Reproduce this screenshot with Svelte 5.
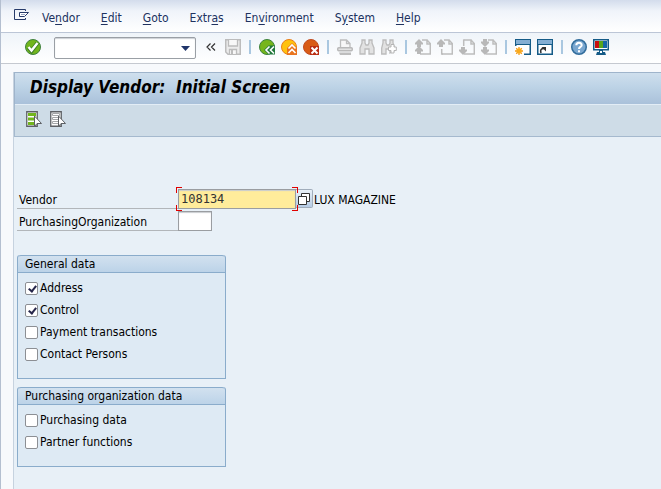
<script>
  const menus = [
    ['Ve', 'n', 'dor'],
    ['', 'E', 'dit'],
    ['', 'G', 'oto'],
    ['Extr', 'a', 's'],
    ['En', 'v', 'ironment'],
    ['S', 'y', 'stem'],
    ['', 'H', 'elp'],
  ];
  const tools = [
    ['save'],
    ['back', 'exit', 'cancel'],
    ['print', 'find', 'find next'],
    ['first page', 'previous page', 'next page', 'last page'],
    ['new session', 'create shortcut'],
    ['help', 'customize layout'],
  ];
  let general = $state([
    { label: 'Address', checked: true },
    { label: 'Control', checked: true },
    { label: 'Payment transactions', checked: false },
    { label: 'Contact Persons', checked: false },
  ]);
  let purchasing = $state([
    { label: 'Purchasing data', checked: false },
    { label: 'Partner functions', checked: false },
  ]);
  let vendor = $state('108134');
  let org = $state('');
</script>

{#snippet page(left)}
  <path d="M{left} 1H12v4h4M12 1l3.300 3.500V15H5" fill="none" stroke="#bdbdbd" stroke-width="1.500" />
{/snippet}

{#snippet up(y)}
  <path d="M4 {y}l4 4v1.500H6V{y + 8}H2V{y + 5.5}H0V{y + 4}z" fill="#b8b8b8" />
{/snippet}

{#snippet down(y)}
  <path d="M4 {y + 8}l4-4V{y + 2.5}H6V{y}H2v2.500H0V{y + 4}z" fill="#b8b8b8" />
{/snippet}

{#snippet icon(name)}
  <svg width="16" height="16" viewBox="0 0 16 16" aria-hidden="true">
    {#if name === 'enter'}
      <circle cx="8" cy="8" r="7.500" fill="#72b51d" stroke="#3f803f" />
      <path d="M3.500 8.500l3 3.500 6-8" fill="none" stroke="#3d7d28" stroke-width="4" />
      <path d="M3.500 8l3 3.500 6-7.500" fill="none" stroke="#fff" stroke-width="2.400" />
    {:else if name === 'save'}
      <path d="M.75.75h14.500v14.500H3L.75 13z" fill="#ececec" stroke="#bcbcbc" stroke-width="1.500" />
      <path d="M3.500 1v6h9V1M4.500 15v-4.500h7V15" fill="#f8f8f8" stroke="#bcbcbc" stroke-width="1.300" />
      <path d="M6 11h2v4H6z" fill="#bcbcbc" />
    {:else if name === 'back'}
      <circle cx="8" cy="8" r="7.500" fill="#76b51c" stroke="#3c823d" />
      <path d="M9.500 6.500L5 11l4.500 4.500H16v-9z" fill="#21783c" />
      <path d="M10.500 7.500L7 11l3.500 3.500M15 7.500L11.500 11l3.500 3.500" fill="none" stroke="#fff" stroke-width="1.600" />
    {:else if name === 'exit'}
      <circle cx="8" cy="8" r="7.500" fill="#ffc20e" stroke="#e87d1a" />
      <path d="M11 4l5 5v7H6V9z" fill="#e8741e" />
      <path d="M7.500 9.500L11 6l3.500 3.500M7.500 14l3.500-3.500 3.500 3.500" fill="none" stroke="#fff" stroke-width="1.600" />
    {:else if name === 'cancel'}
      <circle cx="8" cy="8" r="7.500" fill="#d85b16" stroke="#c04b20" />
      <path d="M7 7h9v9H7z" fill="#b92d12" />
      <path d="M8.500 8.500l6 6M14.500 8.500l-6 6" stroke="#fff" stroke-width="2" />
    {:else if name === 'print'}
      <path d="M3.500 8V1h6L13 4.500V8M9.500 1v3.500H13" fill="#f7f7f7" stroke="#bdbdbd" stroke-width="1.300" />
      <rect x=".75" y="8.750" width="14.500" height="3" rx="1" fill="#e2e2e2" stroke="#b9b9b9" stroke-width="1.500" />
      <path d="M2 13.500h12V16H3z" fill="#bdbdbd" />
    {:else if name === 'find'}
      <path d="M3 1h3v3l1 2h2l1-2V1h3v3l2 5v6h-5v-5H6v5H1V9l2-5z" fill="#e2e2e2" stroke="#bcbcbc" stroke-width="1.300" />
    {:else if name === 'find next'}
      <path d="M2 1h3v3l1 2h2l1-2V1h3v3l1 3v5l-4 2v-4H5v5H.700V9L2 4z" fill="#e2e2e2" stroke="#bcbcbc" stroke-width="1.300" />
      <path d="M10 5.500h3v2.500h2.300v3.500H13V14h-3v-2.500H7.500V8H10z" fill="#fff" stroke="#b5b5b5" />
    {:else if name === 'first page'}
      {@render page(7)}{@render up(0)}{@render up(7)}
    {:else if name === 'previous page'}
      {@render page(7)}{@render up(0)}
      <path d="M4.700 10v5H6" fill="none" stroke="#bdbdbd" stroke-width="1.500" />
    {:else if name === 'next page'}
      {@render page(5)}{@render down(8)}
      <path d="M4.700.300V7" fill="none" stroke="#bdbdbd" stroke-width="1.500" />
    {:else if name === 'last page'}
      {@render page(7)}{@render down(0)}{@render down(8)}
    {:else if name === 'new session'}
      <path d="M.750.750h14.500v14.500H.750z" fill="#fff" stroke="#155b87" stroke-width="1.500" />
      <path d="M1 1h14v4H1z" fill="#84aed3" />
      <path d="M0 7h9v9H0z" fill="#fff" />
      <path d="M0 5h16v1H0z" fill="#155b87" />
      <path d="M4 8v8M0 12h8M1.200 9.200l5.600 5.600M6.800 9.200l-5.600 5.600" stroke="#f39a16" stroke-width="1.300" />
      <circle cx="4" cy="12" r="2.500" fill="#f9aa1b" />
    {:else if name === 'create shortcut'}
      <path d="M.750.750h14.500v14.500H.750z" fill="#fff" stroke="#155b87" stroke-width="1.500" />
      <path d="M1 1h14v4H1z" fill="#84aed3" />
      <path d="M0 5h16v1H0z" fill="#155b87" />
      <path d="M4 14c-1-3 0-4.500 3-4.500" fill="none" stroke="#333" stroke-width="1.600" />
      <path d="M4.500 8H9v4.500z" fill="#333" />
    {:else if name === 'help'}
      <circle cx="8" cy="8" r="7.250" fill="#7aa7d0" stroke="#326d9c" stroke-width="1.500" />
      <path d="M5.300 6.200c0-3.400 5.400-3.400 5.400 0C10.700 8 8 7.900 8 10" fill="none" stroke="#fff" stroke-width="2" />
      <path d="M7 11.200h2v2H7z" fill="#fff" />
    {:else if name === 'customize layout'}
      <path d="M.750.750h14.500v10H.750z" fill="#fff" stroke="#155b87" stroke-width="1.500" />
      <path d="M2 2h4v7H2z" fill="#c90f0f" />
      <path d="M6 2h4v7H6z" fill="#56a51c" />
      <path d="M10 2h4v7h-4z" fill="#1466a6" />
      <path d="M6 11h4v2h2l1 3H3l1-3h2z" fill="#155b87" />
      <path d="M7 12h2v2H7z" fill="#fff" />
    {:else}
      <path d="M.750.750h10.500v14.500H.750z" fill="#fff" stroke="#5d6064" stroke-width="1.300" />
      {#if name === 'execute'}
        <path d="M2 2h8v3H2zM2 6.500h8v3H2zM2 11h8v3H2z" fill="#72b51d" />
      {:else}
        <path d="M2.500 2.500h7v2h-7zM2.500 6.500h7v2h-7zM2.500 10.500h7v2h-7z" fill="none" stroke="#a4a6a8" />
      {/if}
      <path d="M8.500 5v10.500l2.500-3h4.500z" fill="#fff" stroke="#5d6064" />
    {/if}
  </svg>
{/snippet}

{#snippet group(title, items)}
  <fieldset>
    <legend>{title}</legend>
    <div class="options">
      {#each items as item}
        <label><input type="checkbox" bind:checked={item.checked} />{item.label}</label>
      {/each}
    </div>
  </fieldset>
{/snippet}

<div class="window">
  <nav class="menubar">
    <button class="system" aria-label="Window menu">
      <svg width="16" height="13" viewBox="0 0 16 13" aria-hidden="true">
        <path d="M11.500 3V1.500h-11v10h11V10" fill="none" stroke="#263a6a" />
        <path d="M5.500 4.500h9L10.500 8.500h-5z" fill="#fff" stroke="#263a6a" />
        <path d="M7 6.500h4" stroke="#9aa6c4" />
      </svg>
    </button>
    {#each menus as [before, key, after]}
      <button>{before}<u>{key}</u>{after}</button>
    {/each}
  </nav>

  <div class="toolbar" role="toolbar" aria-label="Standard toolbar">
    <button aria-label="enter">{@render icon('enter')}</button>
    <div class="command">
      <select aria-label="Command"><option></option></select>
      <svg width="9" height="5" viewBox="0 0 9 5" aria-hidden="true"><path d="M0 0h9L4.500 5z" fill="#20356a" /></svg>
    </div>
    <button class="collapse" aria-label="Hide command field">
      <svg width="10" height="8" viewBox="0 0 10 8" aria-hidden="true"><path d="M4.500.500L1 4l3.500 3.500M9 .500L5.500 4 9 7.500" fill="none" stroke="#333" stroke-width="1.200" /></svg>
    </button>
    {#each tools as set, i}
      {#if i}<span class="separator"></span>{/if}
      {#each set as name}
        <button aria-label={name}>{@render icon(name)}</button>
      {/each}
    {/each}
  </div>

  <main>
    <h1>Display Vendor:&nbsp; Initial Screen</h1>
    <div class="actions">
      <button aria-label="execute">{@render icon('execute')}</button>
      <button aria-label="details">{@render icon('details')}</button>
    </div>

    <form>
      <div class="row">
        <label for="vendor">Vendor</label>
        <span class="focus"><input id="vendor" bind:value={vendor} /><i></i><i></i><i></i><i></i></span>
        <button type="button" class="match" aria-label="Search vendor">
          <svg width="12" height="12" viewBox="0 0 12 12" aria-hidden="true">
            <path d="M3.500 3V.500h8v8H9" fill="#fff" stroke="#333" />
            <path d="M.500 3.500h8v8h-8z" fill="#fff" stroke="#333" />
          </svg>
        </button>
        <output for="vendor">LUX MAGAZINE</output>
      </div>
      <div class="row">
        <label for="org">PurchasingOrganization</label>
        <input id="org" bind:value={org} />
      </div>
      <div class="groups">
        {@render group('General data', general)}
        {@render group('Purchasing organization data', purchasing)}
      </div>
    </form>
  </main>
</div>

<style>
  :global(body) {
    background: #f7f9fc;
  }
  .window {
    box-sizing: border-box;
    display: flex;
    flex-direction: column;
    min-height: 100vh;
    border-left: 1px solid #b4bfd0;
    font: 12px/16px "DejaVu Sans Condensed", "Noto Sans", sans-serif;
    color: #000;
  }
  button,
  input,
  select {
    font: inherit;
    color: inherit;
    margin: 0;
    padding: 0;
    border: 0;
    background: none;
    border-radius: 0;
    box-sizing: border-box;
  }
  svg {
    display: block;
  }
  .menubar {
    display: flex;
    align-items: center;
    gap: 21px;
    height: 33px;
    padding: 3px 0 0 13px;
    box-sizing: border-box;
    background: linear-gradient(#d3dcec, #f0f4fa 35%, #fff);
    border-bottom: 1px solid #bcc6d6;
    color: #20325f;
  }
  .menubar button {
    white-space: nowrap;
  }
  .menubar .system {
    margin: 0 -9px 6px 0;
  }
  u {
    text-underline-offset: 2px;
  }
  .toolbar {
    display: flex;
    align-items: center;
    gap: 6px;
    height: 31px;
    box-sizing: border-box;
    padding: 0 0 2px 24px;
    background: linear-gradient(#eff4f9, #fff);
    border-bottom: 1px solid #c5c9d0;
  }
  .command {
    display: grid;
    align-items: center;
    width: 142px;
    height: 22px;
    margin: 2px 4px 0 7px;
  }
  .command select,
  .command svg {
    grid-area: 1 / 1;
  }
  .command select {
    appearance: none;
    width: 100%;
    height: 100%;
    border: 1px solid #9a9fa5;
    border-radius: 2px;
    background: #fff;
    box-shadow: inset 0 1px 1px #ccd0d5;
  }
  .command svg {
    justify-self: end;
    margin-right: 6px;
    pointer-events: none;
  }
  .collapse {
    margin-right: 3px;
  }
  .separator {
    width: 2px;
    height: 14px;
    margin: 0 2px;
    background: #a9c7e0;
  }
  main {
    flex: 1;
    margin: 8px 0 0 12px;
    border-left: 1px solid #c6d2df;
    background: #e8f0f7;
  }
  h1 {
    margin: 0;
    height: 32px;
    box-sizing: border-box;
    padding: 0 0 3px 15px;
    border: 1px solid #9fb4cb;
    border-width: 1px 0 0 1px;
    background: linear-gradient(#cfdfed, #bdd3e6 45%, #aac1da);
    font: italic bold 17px/28px "DejaVu Sans Condensed", "Noto Sans", sans-serif;
  }
  .actions {
    display: flex;
    align-items: center;
    gap: 8px;
    height: 33px;
    box-sizing: border-box;
    padding: 0 0 2px 11px;
    border: 1px solid #a5b9ce;
    border-width: 0 0 1px 1px;
    box-shadow: inset 0 1px #e3edf6;
    background: #cedce7;
  }
  form {
    padding: 52px 3px 22px;
  }
  .row {
    display: flex;
    align-items: flex-end;
    height: 20px;
    margin-bottom: 2px;
  }
  .row label {
    width: 161px;
    height: 20px;
    box-sizing: border-box;
    padding: 3px 0 0 2px;
    border-bottom: 1px solid #b2b6ba;
  }
  .row input {
    height: 20px;
    padding: 0 2px;
    border: 1px solid #9a9da1;
    box-shadow: inset 0 1px 1px #c9ccd0;
    font: 12px/16px "DejaVu Sans Mono", "Liberation Mono", monospace;
    color: #333;
  }
  #vendor {
    display: block;
    width: 118px;
    background: #ffec9b;
  }
  #org {
    width: 34px;
    background: #fff;
  }
  .focus {
    position: relative;
  }
  .focus i {
    position: absolute;
    width: 5px;
    height: 5px;
    border: 0 solid #e00000;
  }
  .focus i:nth-of-type(1) {
    top: -2px;
    left: -2px;
    border-width: 1px 0 0 1px;
  }
  .focus i:nth-of-type(2) {
    top: -2px;
    right: -2px;
    border-width: 1px 1px 0 0;
  }
  .focus i:nth-of-type(3) {
    bottom: -2px;
    left: -2px;
    border-width: 0 0 1px 1px;
  }
  .focus i:nth-of-type(4) {
    right: -2px;
    bottom: -2px;
    border-width: 0 1px 1px 0;
  }
  .match {
    display: grid;
    place-items: center;
    width: 17px;
    height: 19px;
    align-self: flex-start;
    border: 1px solid #a1adbb;
    border-left: 0;
    border-radius: 0 2px 2px 0;
    background: linear-gradient(#e9f1f8, #b6cce6);
  }
  output {
    height: 17px;
    padding-left: 1px;
    white-space: nowrap;
  }
  .groups {
    display: flex;
    flex-direction: column;
    gap: 8px;
    width: 209px;
    margin-top: 24px;
  }
  fieldset {
    min-width: 0;
    margin: 0;
    padding: 0;
    border: 1px solid #8aaccb;
    border-top: 0;
    border-radius: 3px 3px 0 0;
    background: #deeaf4;
  }
  legend {
    display: block;
    float: left;
    width: 100%;
    height: 18px;
    box-sizing: border-box;
    padding: 0 7px;
    border: 1px solid #8aaccb;
    border-width: 1px 0;
    border-radius: 3px 3px 0 0;
    background: linear-gradient(#d2e1ef, #bcd3e8);
  }
  .options {
    clear: both;
    padding: 4px 7px 13px;
  }
  .options label {
    display: flex;
    align-items: center;
    gap: 2px;
    height: 22px;
  }
  input[type="checkbox"] {
    appearance: none;
    width: 13px;
    height: 13px;
    border: 1px solid #8c8f94;
    border-radius: 2px;
    background: #fff;
  }
  input[type="checkbox"]:checked::before {
    content: "";
    display: block;
    width: 3px;
    height: 6px;
    margin: 1px 0 0 4px;
    border: solid #26264a;
    border-width: 0 2px 2px 0;
    transform: rotate(38deg);
  }
</style>
